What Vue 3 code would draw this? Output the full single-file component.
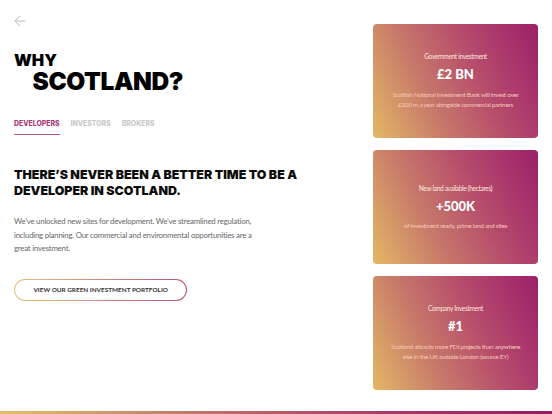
<script setup>
const tabs = ['Developers', 'Investors', 'Brokers']
const cards = [
  { label: 'Government investment', value: '£2 BN', text: ['Scottish National Investment Bank will invest over', '£200 m a year alongside commercial partners'] },
  { label: 'New land available (hectares)', value: '+500K', text: ['of investment ready, prime land and sites'] },
  { label: 'Company Investment', value: '#1', text: ['Scotland attracts more FDI projects than anywhere', 'else in the UK outside London (source EY)'] }
]
</script>

<template>
  <div class="page">
    <main class="left">
      <svg class="back" width="12" height="12" viewBox="0 0 12 12" fill="none" stroke="#bdbdbd" stroke-width="1">
        <path d="M11.5 6H1.2M6 .9 .9 6 6 11.1" />
      </svg>
      <h1 class="title"><span class="why">WHY</span><span class="scotland">SCOTLAND?</span></h1>
      <nav class="tabs">
        <span v-for="(t, i) in tabs" :key="t" class="tab" :class="{ active: i === 0 }">{{ t }}</span>
      </nav>
      <h2 class="headline">THERE’S NEVER BEEN A BETTER TIME TO BE A DEVELOPER IN SCOTLAND.</h2>
      <p class="copy">We’ve unlocked new sites for development. We’ve streamlined regulation, including planning. Our commercial and environmental opportunities are a great investment.</p>
      <a class="cta"><span class="cta-inner">VIEW OUR GREEN INVESTMENT PORTFOLIO</span></a>
    </main>
    <aside class="right">
      <section v-for="c in cards" :key="c.label" class="card">
        <div class="label">{{ c.label }}</div>
        <div class="value">{{ c.value }}</div>
        <div class="text"><div v-for="l in c.text" :key="l">{{ l }}</div></div>
      </section>
    </aside>
  </div>
  <div class="bar"></div>
</template>

<style>
html, body { margin: 0; background: #fff; }
</style>

<style scoped>
.page {
  display: flex;
  height: 411px;
  box-sizing: border-box;
  font-family: Lato, "Liberation Sans", sans-serif;
}
.left {
  width: 373px;
  box-sizing: border-box;
  padding: 15px 0 0 14px;
}
.back { display: block; }
.title {
  margin: 25px 0 0;
  font-family: Inter, sans-serif;
  font-weight: 900;
  color: #000;
}
.why { display: block; font-size: 16.5px; line-height: 17px; }
.scotland { display: block; margin: 0 0 0 18.5px; font-size: 24.5px; line-height: 24px; letter-spacing: -0.4px; }
.tabs { display: flex; gap: 11px; margin-top: 26px; }
.tab {
  font-family: Inter, sans-serif;
  font-weight: 800;
  font-size: 6.9px;
  line-height: 9px;
  padding-bottom: 6px;
  text-transform: uppercase;
  color: #c9c9c9;
  border-bottom: 1.5px solid transparent;
}
.tab.active { color: #a8397a; border-bottom-color: #b8558a; }
.headline {
  margin: 32px 0 0;
  width: 300px;
  font-family: Inter, sans-serif;
  font-weight: 900;
  font-size: 12.4px;
  line-height: 16px;
  color: #0c0c0c;
}
.copy {
  margin: 16px 0 0;
  width: 243px;
  font-size: 7.8px;
  letter-spacing: -0.2px;
  font-weight: 400;
  line-height: 13.5px;
  color: #666;
}
.cta {
  display: inline-block;
  margin-top: 23px;
  padding: 1.2px;
  border-radius: 12px;
  background: linear-gradient(90deg, #e6c47c, #b5517f);
}
.cta-inner {
  display: block;
  width: 171px;
  height: 20.5px;
  border-radius: 11px;
  background: #fff;
  font-size: 6.4px;
  font-weight: 700;
  line-height: 20.5px;
  text-align: center;
  color: #333;
}
.right {
  display: flex;
  flex-direction: column;
  gap: 12px;
  padding-top: 24px;
}
.card {
  width: 165px;
  height: 114px;
  box-sizing: border-box;
  display: flex;
  flex-direction: column;
  align-items: center;
  justify-content: center;
  border-radius: 4px;
  background: linear-gradient(65deg, #e3b866 0%, #c7786a 34%, #b54a6c 64%, #9c1f6a 100%);
  color: #fff;
  text-align: center;
}
.label { font-size: 6.6px; letter-spacing: -0.35px; line-height: 10px; color: #ffe4dc; }
.value {
  margin-top: 6px;
  font-size: 13px;
  font-weight: 900;
  line-height: 14px;
}
.text {
  margin-top: 8.5px;
  font-size: 6.5px;
  letter-spacing: -0.32px;
  line-height: 10.3px;
  color: #f6c5b5;
}
.bar {
  height: 3px;
  background: linear-gradient(90deg, #e3c068, #c07767 35%, #a83a68 70%, #8f1f5e);
}
</style>
